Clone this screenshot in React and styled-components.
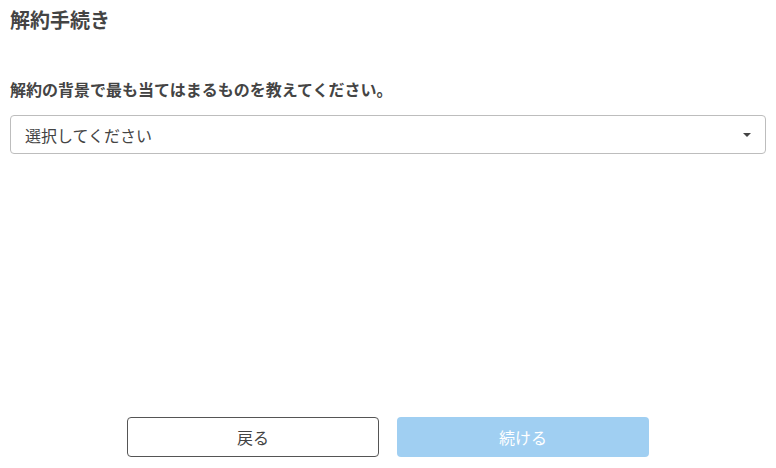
import styled, { createGlobalStyle } from 'styled-components';

const GlobalStyle = createGlobalStyle`
  html, body {
    margin: 0;
    padding: 0;
    background: #fff;
  }
  body {
    font-family: "Noto Sans CJK JP", "Noto Sans", sans-serif;
    color: #444;
  }
`;

const Page = styled.div`
  height: 468px;
  box-sizing: border-box;
  padding: 0 10px 11px;
  display: flex;
  flex-direction: column;
`;

const Title = styled.h1`
  margin: 0;
  padding-top: 5px;
  font-size: 20px;
  font-weight: 700;
  line-height: 30px;
  color: #444;
`;

const Question = styled.p`
  margin: 42px 0 0;
  font-size: 16px;
  font-weight: 700;
  line-height: 24px;
  color: #444;
`;

const Select = styled.div`
  margin-top: 14px;
  height: 39px;
  box-sizing: border-box;
  border: 1px solid #bdbdbd;
  border-radius: 4px;
  display: flex;
  align-items: center;
  justify-content: space-between;
  padding: 0 14px 0 14px;
  font-size: 16px;
  color: #444;
`;

const Caret = styled.span`
  width: 0;
  height: 0;
  border-left: 4px solid transparent;
  border-right: 4px solid transparent;
  border-top: 4px solid #444;
  margin-top: 1px;
`;

const Footer = styled.div`
  margin-top: auto;
  display: flex;
  justify-content: center;
  gap: 18px;
`;

const Button = styled.button`
  width: 252px;
  height: 40px;
  box-sizing: border-box;
  border-radius: 4px;
  font-family: inherit;
  font-size: 16px;
  border: ${(p) => (p.$primary ? 'none' : '1px solid #555')};
  background: ${(p) => (p.$primary ? '#a0cff2' : '#fff')};
  color: ${(p) => (p.$primary ? '#fff' : '#444')};
  cursor: pointer;
`;

function App() {
  return (
    <>
      <GlobalStyle />
      <Page>
        <Title>解約手続き</Title>
        <Question>解約の背景で最も当てはまるものを教えてください。</Question>
        <Select>
          <span>選択してください</span>
          <Caret />
        </Select>
        <Footer>
          <Button>戻る</Button>
          <Button $primary disabled>続ける</Button>
        </Footer>
      </Page>
    </>
  );
}

export default App;
